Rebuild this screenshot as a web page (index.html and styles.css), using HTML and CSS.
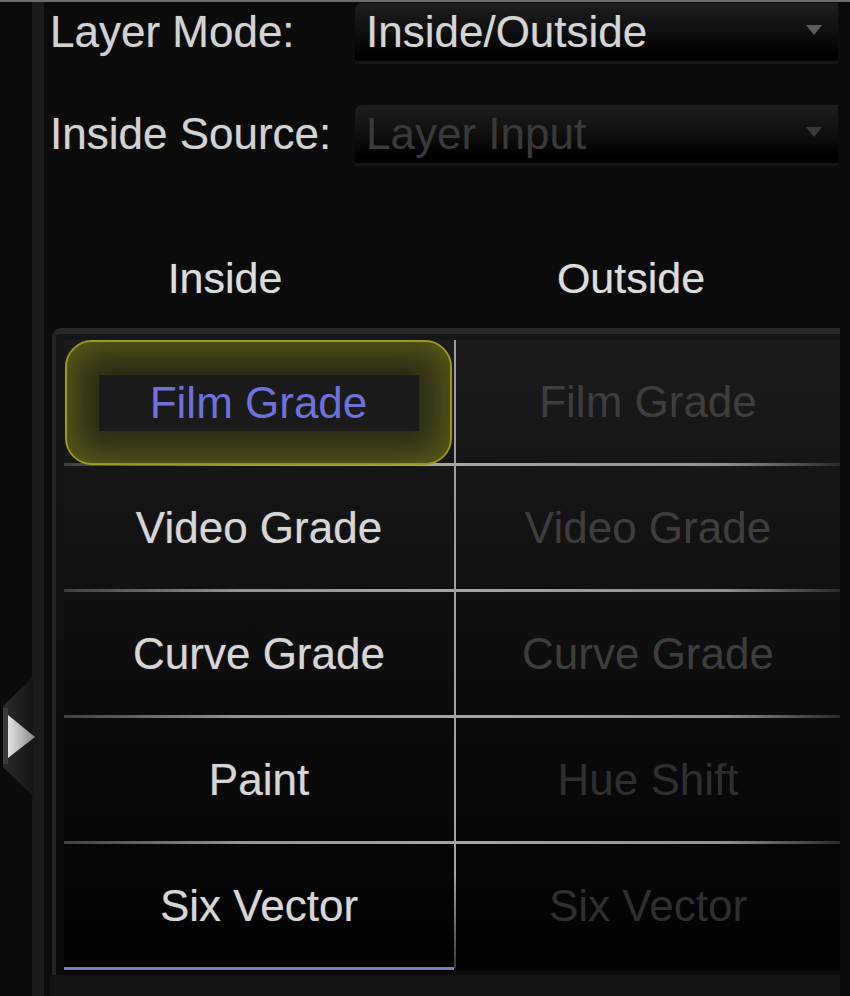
FILE: index.html
```html
<!DOCTYPE html>
<html>
<head>
<meta charset="utf-8">
<link rel="stylesheet" href="styles.css">
</head>
<body>
<div class="app">
  <div class="gutter">
    <svg class="tab" width="36" height="120" viewBox="0 0 36 120">
      <defs>
        <linearGradient id="tabg" x1="0" y1="0" x2="1" y2="0">
          <stop offset="0" stop-color="#2c2c2c"/>
          <stop offset="1" stop-color="#151515"/>
        </linearGradient>
        <linearGradient id="trig" x1="0" y1="0" x2="1" y2="0">
          <stop offset="0" stop-color="#e2e2e2"/>
          <stop offset="1" stop-color="#8a8a8a"/>
        </linearGradient>
      </defs>
      <polygon points="33,0 3,29 3,90 33,119" fill="url(#tabg)"/>
      <rect x="3" y="31" width="5" height="56" fill="#3c3c3c"/>
      <polygon points="8,38 35,60 8,81" fill="url(#trig)"/>
    </svg>
  </div>
  <div class="rail"></div>
  <div class="main">
    <div class="form">
      <div class="field">
        <span class="label">Layer Mode:</span>
        <div class="select">
          <span class="value">Inside/Outside</span>
          <svg class="arrow" width="16" height="10" viewBox="0 0 16 10"><polygon points="0,0 16,0 8,10" fill="#5e5e5e"/></svg>
        </div>
      </div>
      <div class="field field-2">
        <span class="label">Inside Source:</span>
        <div class="select disabled">
          <span class="value">Layer Input</span>
          <svg class="arrow" width="16" height="10" viewBox="0 0 16 10"><polygon points="0,0 16,0 8,10" fill="#383838"/></svg>
        </div>
      </div>
    </div>
    <div class="heads">
      <div class="head">Inside</div>
      <div class="head head-out">Outside</div>
    </div>
    <div class="panel">
      <div class="grid">
        <div class="cell in sel"><div class="hl"><span class="sel-label">Film Grade</span></div></div>
        <div class="divider"></div>
        <div class="cell out">Film Grade</div>
        <div class="cell in">Video Grade</div>
        <div class="cell out">Video Grade</div>
        <div class="cell in">Curve Grade</div>
        <div class="cell out">Curve Grade</div>
        <div class="cell in">Paint</div>
        <div class="cell out dim">Hue Shift</div>
        <div class="cell in last">Six Vector</div>
        <div class="cell out dim last">Six Vector</div>
      </div>
    </div>
    <div class="footer"></div>
  </div>
</div>
</body>
</html>
```
FILE: styles.css
```css
html, body {
  margin: 0;
  padding: 0;
  background: #0b0b0b;
}
body {
  width: 850px;
  height: 996px;
  overflow: hidden;
  font-family: "Liberation Sans", Arial, sans-serif;
}
.app {
  display: flex;
  height: 994px;
  border-top: 2px solid #6c6c6c;
}
.gutter {
  width: 32px;
  flex-shrink: 0;
  position: relative;
  background: #0b0b0b;
}
.tab {
  position: absolute;
  left: 0;
  top: 675px;
}
.rail {
  width: 12px;
  flex-shrink: 0;
  background: #1b1b1b;
}
.main {
  flex: 1;
  min-width: 0;
  display: flex;
  flex-direction: column;
  padding-left: 6px;
  padding-right: 10px;
}
.form {
  padding-top: 1px;
  display: flex;
  flex-direction: column;
  gap: 44px;
}
.field {
  display: flex;
  align-items: center;
  height: 58px;
}
.label {
  width: 305px;
  flex-shrink: 0;
  font-size: 44px;
  color: #d2d2d2;
  white-space: nowrap;
  text-shadow: 0 0 1px rgba(210, 210, 210, 0.5);
}
.select {
  flex: 1;
  height: 58px;
  margin-right: 2px;
  display: flex;
  align-items: center;
  padding-left: 11px;
  padding-right: 16px;
  border-radius: 7px 0 0 0;
  background: linear-gradient(#1e1e1e, #0d0d0d 55%, #000 90%);
  box-shadow: 0 3px 0 #141414;
}
.value {
  flex: 1;
  font-size: 44px;
  color: #d4d4d4;
  white-space: nowrap;
  text-shadow: 0 0 1px rgba(210, 210, 210, 0.4);
}
.select.disabled .value {
  color: #3a3a3a;
  text-shadow: none;
}
.arrow {
  margin-top: -5px;
}
.heads {
  display: grid;
  grid-template-columns: 350px 1fr;
  margin-top: 90px;
  margin-bottom: 25px;
}
.head {
  font-size: 43px;
  line-height: 50px;
  color: #dcdcdc;
  text-align: center;
  white-space: nowrap;
  text-shadow: 0 0 1px rgba(220, 220, 220, 0.5);
}
.head-out {
  padding-left: 22px;
}
.panel {
  margin-left: 2px;
  border-top: 6px solid #2a2a2a;
  border-left: 4px solid #232323;
  border-radius: 9px 0 0 0;
  padding: 6px 0 5px 8px;
  background: linear-gradient(#161616, #0a0a0a);
}
.grid {
  display: grid;
  grid-template-columns: 390px 2px 1fr;
  grid-auto-rows: 126px;
  background: linear-gradient(#1b1b1b, #121212 35%, #0b0b0b 60%, #020202);
}
.divider {
  grid-column: 2;
  grid-row: 1 / span 5;
  margin-bottom: 2px;
  background: linear-gradient(#9c9c9c, #a4a4a4 85%, #3a3a3a);
}
.cell {
  display: flex;
  align-items: center;
  justify-content: center;
  padding-bottom: 2px;
  font-size: 44px;
  white-space: nowrap;
  background-repeat: no-repeat;
  background-position: bottom left;
  background-size: 100% 3px;
}
.cell.in {
  grid-column: 1;
  color: #d6d6d6;
  text-shadow: 0 0 1px rgba(214, 214, 214, 0.5);
  background-image: linear-gradient(to right, #404040, #949494 45%, #a6a6a6);
}
.cell.out {
  grid-column: 3;
  color: #3e3e3e;
  background-image: linear-gradient(to right, #a6a6a6, #909090 70%, #2a2a2a);
}
.cell.out.dim {
  color: #2f2f2f;
}
.cell.in.last {
  background-image: linear-gradient(#7080c0, #7080c0);
}
.cell.out.last {
  background-image: none;
}
.cell.sel {
  padding: 0 2px 1px 1px;
  align-items: stretch;
  text-shadow: none;
}
.hl {
  flex: 1;
  display: flex;
  align-items: center;
  justify-content: center;
  border: 2px solid #9a9a1e;
  border-radius: 27px;
  background: #2c2c17;
  box-shadow: inset 0 0 30px 10px rgba(118, 118, 26, 0.6);
}
.sel-label {
  width: 320px;
  height: 56px;
  display: flex;
  align-items: center;
  justify-content: center;
  background: #1b1b1b;
  color: #7071da;
  font-size: 44px;
}
.footer {
  flex: 1;
  background: #131313;
}
```
